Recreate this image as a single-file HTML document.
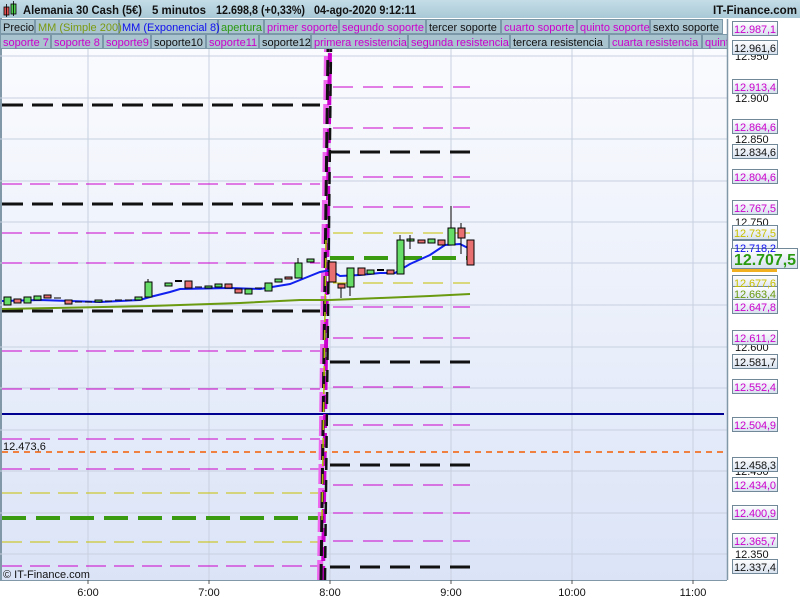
<!DOCTYPE html>
<html><head><meta charset="utf-8"><style>
body{margin:0;width:800px;height:600px;overflow:hidden;background:#fff;font-family:"Liberation Sans",sans-serif}
</style></head><body>
<svg width="800" height="600" xmlns="http://www.w3.org/2000/svg" font-family="Liberation Sans, sans-serif">
<defs>
<linearGradient id="bg" x1="0" y1="0" x2="0" y2="1"><stop offset="0" stop-color="#fafbfe"/><stop offset="1" stop-color="#dbe4f7"/></linearGradient>
<linearGradient id="tb" x1="0" y1="0" x2="0" y2="1"><stop offset="0" stop-color="#c4dde7"/><stop offset="1" stop-color="#a9c8d6"/></linearGradient>
<linearGradient id="lb" x1="0" y1="0" x2="0" y2="1"><stop offset="0" stop-color="#ffffff"/><stop offset="1" stop-color="#d6e0ee"/></linearGradient>
</defs>
<rect x="0" y="0" width="800" height="600" fill="#fff"/>
<rect x="1" y="48" width="726" height="532" fill="url(#bg)"/>
<line x1="1" y1="0" x2="1" y2="580" stroke="#8098a8" stroke-width="2"/>
<g stroke="#c8d0e0" stroke-width="1">
<line x1="0" y1="56" x2="727" y2="56"/><line x1="0" y1="98" x2="727" y2="98"/><line x1="0" y1="139" x2="727" y2="139"/><line x1="0" y1="181" x2="727" y2="181"/><line x1="0" y1="222" x2="727" y2="222"/><line x1="0" y1="263" x2="727" y2="263"/><line x1="0" y1="305" x2="727" y2="305"/><line x1="0" y1="347" x2="727" y2="347"/><line x1="0" y1="388" x2="727" y2="388"/><line x1="0" y1="430" x2="727" y2="430"/><line x1="0" y1="471" x2="727" y2="471"/><line x1="0" y1="513" x2="727" y2="513"/><line x1="0" y1="554" x2="727" y2="554"/>
<line x1="88" y1="48" x2="88" y2="580"/><line x1="209" y1="48" x2="209" y2="580"/><line x1="330" y1="48" x2="330" y2="580"/><line x1="451" y1="48" x2="451" y2="580"/><line x1="572" y1="48" x2="572" y2="580"/><line x1="693" y1="48" x2="693" y2="580"/>
</g>
<g fill="none">
<g stroke="#111" stroke-width="3" stroke-dasharray="21,9">
<line x1="2" y1="105" x2="320" y2="105"/><line x1="2" y1="204" x2="320" y2="204"/><line x1="2" y1="311" x2="320" y2="311"/>
</g>
<g stroke="#cc00cc" stroke-width="1" stroke-dasharray="20,8">
<line x1="2" y1="184" x2="320" y2="184"/><line x1="2" y1="233" x2="320" y2="233"/><line x1="2" y1="263" x2="320" y2="263"/><line x1="2" y1="351" x2="320" y2="351"/><line x1="2" y1="389" x2="320" y2="389"/><line x1="2" y1="439" x2="320" y2="439"/><line x1="2" y1="469" x2="320" y2="469"/><line x1="2" y1="566" x2="320" y2="566"/>
</g>
<g stroke="#c8c000" stroke-width="1" stroke-dasharray="20,8">
<line x1="2" y1="493" x2="320" y2="493"/><line x1="2" y1="542" x2="320" y2="542"/>
</g>
<line x1="2" y1="518" x2="320" y2="518" stroke="#3a9a10" stroke-width="4" stroke-dasharray="24,10"/>
<line x1="2" y1="414" x2="724" y2="414" stroke="#000090" stroke-width="2"/>
<line x1="2" y1="452" x2="727" y2="452" stroke="#f08040" stroke-width="2" stroke-dasharray="6,5"/>
<g stroke="#cc00cc" stroke-width="1" stroke-dasharray="20,10">
<line x1="333" y1="87" x2="470" y2="87"/><line x1="333" y1="128" x2="470" y2="128"/><line x1="333" y1="177" x2="470" y2="177"/><line x1="333" y1="207" x2="470" y2="207"/><line x1="333" y1="307" x2="470" y2="307"/><line x1="333" y1="338" x2="470" y2="338"/><line x1="333" y1="387" x2="470" y2="387"/><line x1="333" y1="425" x2="470" y2="425"/><line x1="333" y1="485" x2="470" y2="485"/><line x1="333" y1="513" x2="470" y2="513"/><line x1="333" y1="541" x2="470" y2="541"/>
</g>
<g stroke="#c8c000" stroke-width="1" stroke-dasharray="20,10">
<line x1="333" y1="233" x2="470" y2="233"/><line x1="333" y1="283" x2="470" y2="283"/>
</g>
<g stroke="#111" stroke-width="3" stroke-dasharray="20,10">
<line x1="330" y1="152" x2="470" y2="152"/><line x1="330" y1="362" x2="470" y2="362"/><line x1="330" y1="465" x2="470" y2="465"/><line x1="330" y1="567" x2="470" y2="567"/>
</g>
<line x1="330" y1="258" x2="470" y2="258" stroke="#3a9a10" stroke-width="4" stroke-dasharray="24,10"/>
<line x1="320" y1="580" x2="327" y2="48" stroke="#ee66ee" stroke-width="6" stroke-dasharray="20,4"/>
<line x1="323" y1="580" x2="330" y2="48" stroke="#cc00cc" stroke-width="4" stroke-dasharray="14,5"/>
<line x1="321" y1="580" x2="328" y2="48" stroke="#111" stroke-width="3" stroke-dasharray="16,8"/>
<line x1="325" y1="580" x2="331" y2="48" stroke="#111" stroke-width="2.5" stroke-dasharray="12,10"/>
<line x1="322" y1="520" x2="326" y2="240" stroke="#b0c000" stroke-width="1.5" stroke-dasharray="10,8"/>
<polyline stroke="#6a9a10" stroke-width="2" points="2,309 150,306 240,303 300,300 330,300 380,298 430,296 470,294"/>
<polyline stroke="#1020ee" stroke-width="2" points="2,301 40,300 100,302 140,300 150,297 170,292 180,289 230,288 260,289 290,284 305,278 320,272 330,270 340,276 360,275 380,273 395,273 410,264 430,255 445,245 460,244 470,249"/>
</g>
<g stroke="#000" stroke-width="1">
<g fill="#66dd66">
<rect x="4" y="297" width="7" height="8"/><rect x="24" y="297" width="7" height="6"/><rect x="34" y="296" width="7" height="4"/><rect x="95" y="300" width="7" height="2"/><rect x="135" y="297" width="7" height="3"/><rect x="145" y="282" width="7" height="15"/><rect x="165" y="283" width="7" height="3"/><rect x="205" y="286" width="7" height="2"/><rect x="215" y="284" width="7" height="3"/><rect x="245" y="289" width="7" height="5"/><rect x="265" y="283" width="7" height="8"/><rect x="275" y="279" width="7" height="3"/><rect x="295" y="263" width="7" height="15"/><rect x="307" y="259" width="7" height="3"/>
<rect x="347" y="268" width="7" height="19"/><rect x="367" y="270" width="7" height="4"/><rect x="397" y="240" width="7" height="34"/><rect x="407" y="239" width="7" height="2"/><rect x="428" y="239" width="7" height="4"/><rect x="448" y="228" width="7" height="17"/>
</g>
<g fill="#e87070">
<rect x="14" y="299" width="7" height="4"/><rect x="44" y="295" width="7" height="3"/><rect x="65" y="300" width="7" height="4"/><rect x="185" y="281" width="7" height="7"/><rect x="225" y="284" width="7" height="4"/><rect x="235" y="289" width="7" height="4"/><rect x="285" y="277" width="7" height="2"/>
<rect x="329" y="262" width="7" height="20"/><rect x="338" y="284" width="7" height="4"/><rect x="358" y="268" width="7" height="7"/><rect x="387" y="270" width="7" height="4"/><rect x="418" y="240" width="7" height="3"/><rect x="438" y="240" width="7" height="5"/><rect x="458" y="228" width="7" height="10"/><rect x="467" y="240" width="7" height="25"/>
</g>
<line x1="54" y1="298" x2="61" y2="298"/><line x1="75" y1="302" x2="82" y2="302"/><line x1="85" y1="302" x2="92" y2="302"/><line x1="105" y1="301" x2="112" y2="301"/><line x1="115" y1="300" x2="122" y2="300"/><line x1="125" y1="300" x2="132" y2="300"/><line x1="175" y1="281" x2="182" y2="281" stroke-width="2"/><line x1="195" y1="287" x2="202" y2="287"/><line x1="255" y1="288" x2="262" y2="288"/><line x1="377" y1="270" x2="384" y2="270" stroke-width="2"/>
<line x1="148" y1="279" x2="148" y2="282"/><line x1="298" y1="258" x2="298" y2="263"/><line x1="341" y1="288" x2="341" y2="298"/><line x1="350" y1="287" x2="350" y2="296"/><line x1="400" y1="235" x2="400" y2="240"/><line x1="451" y1="206" x2="451" y2="228"/><line x1="461" y1="223" x2="461" y2="228"/><line x1="461" y1="238" x2="461" y2="254"/><line x1="410" y1="235" x2="410" y2="249"/>
</g>
<rect x="0" y="0" width="800" height="18" fill="url(#tb)"/>
<rect x="4" y="7" width="5" height="8" fill="#e05050" stroke="#000" stroke-width="0.8"/><line x1="6.5" y1="4" x2="6.5" y2="17" stroke="#000" stroke-width="0.8"/>
<rect x="11" y="4" width="5" height="10" fill="#50d050" stroke="#000" stroke-width="0.8"/><line x1="13.5" y1="1" x2="13.5" y2="16" stroke="#000" stroke-width="0.8"/>
<g font-size="12" font-weight="bold" fill="#111" lengthAdjust="spacingAndGlyphs">
<text x="23" y="14" textLength="119" lengthAdjust="spacingAndGlyphs">Alemania 30 Cash (5€)</text><text x="152" y="14" textLength="54" lengthAdjust="spacingAndGlyphs">5 minutos</text><text x="216" y="14" textLength="89" lengthAdjust="spacingAndGlyphs">12.698,8 (+0,33%)</text><text x="314" y="14" textLength="102" lengthAdjust="spacingAndGlyphs">04-ago-2020 9:12:11</text>
<text x="713" y="14" textLength="84" lengthAdjust="spacingAndGlyphs">IT-Finance.com</text>
</g>
<g font-size="11" stroke="#7a98a8" stroke-width="1">
<rect x="0.5" y="19.5" width="34" height="14" fill="#a9c3cf"/><rect x="35.5" y="19.5" width="83" height="14" fill="#a9c3cf"/><rect x="119.5" y="19.5" width="98" height="14" fill="#a9c3cf"/><rect x="218.5" y="19.5" width="45" height="14" fill="#a9c3cf"/><rect x="264.5" y="19.5" width="74" height="14" fill="#a9c3cf"/><rect x="339.5" y="19.5" width="86" height="14" fill="#a9c3cf"/><rect x="426.5" y="19.5" width="74" height="14" fill="#a9c3cf"/><rect x="501.5" y="19.5" width="75" height="14" fill="#a9c3cf"/><rect x="577.5" y="19.5" width="72" height="14" fill="#a9c3cf"/><rect x="650.5" y="19.5" width="72" height="14" fill="#a9c3cf"/>
<rect x="0.5" y="34.5" width="50" height="14" fill="#a9c3cf"/><rect x="51.5" y="34.5" width="51" height="14" fill="#a9c3cf"/><rect x="103.5" y="34.5" width="47" height="14" fill="#a9c3cf"/><rect x="151.5" y="34.5" width="54" height="14" fill="#a9c3cf"/><rect x="206.5" y="34.5" width="52" height="14" fill="#a9c3cf"/><rect x="259.5" y="34.5" width="51" height="14" fill="#a9c3cf"/><rect x="311.5" y="34.5" width="96" height="14" fill="#a9c3cf"/><rect x="408.5" y="34.5" width="101" height="14" fill="#a9c3cf"/><rect x="510.5" y="34.5" width="98" height="14" fill="#a9c3cf"/><rect x="609.5" y="34.5" width="92" height="14" fill="#a9c3cf"/><rect x="702.5" y="34.5" width="25" height="14" fill="#a9c3cf"/>
</g>
<g font-size="11">
<text x="3" y="31" fill="#111">Precio</text><text x="38" y="31" fill="#7a9a10">MM (Simple 200)</text><text x="122" y="31" fill="#1010ee">MM (Exponencial 8)</text><text x="221" y="31" fill="#2a9a10">apertura</text><text x="267" y="31" fill="#cc00cc">primer soporte</text><text x="342" y="31" fill="#cc00cc">segundo soporte</text><text x="429" y="31" fill="#111">tercer soporte</text><text x="504" y="31" fill="#cc00cc">cuarto soporte</text><text x="580" y="31" fill="#cc00cc">quinto soporte</text><text x="653" y="31" fill="#111">sexto soporte</text>
<text x="3" y="46" fill="#cc00cc">soporte 7</text><text x="54" y="46" fill="#cc00cc">soporte 8</text><text x="106" y="46" fill="#cc00cc">soporte9</text><text x="154" y="46" fill="#111">soporte10</text><text x="209" y="46" fill="#cc00cc">soporte11</text><text x="262" y="46" fill="#111">soporte12</text><text x="314" y="46" fill="#cc00cc">primera resistencia</text><text x="411" y="46" fill="#cc00cc">segunda resistencia</text><text x="513" y="46" fill="#111">tercera resistencia</text><text x="612" y="46" fill="#cc00cc">cuarta resistencia</text><text x="705" y="46" fill="#cc00cc">quinta</text>
</g>
<rect x="728" y="19" width="72" height="581" fill="#fff"/>
<line x1="727.5" y1="19" x2="727.5" y2="580" stroke="#8098a8" stroke-width="1.5"/>
<g font-size="11" fill="#111">
<text x="735" y="60">12.950</text><text x="735" y="102">12.900</text><text x="735" y="143">12.850</text><text x="735" y="226">12.750</text><text x="735" y="351">12.600</text><text x="735" y="475">12.450</text><text x="735" y="558">12.350</text>
</g>
<g stroke="#708898" stroke-width="1">
<rect x="732.5" y="21.5" width="45" height="14" fill="url(#lb)"/><rect x="732.5" y="40.5" width="45" height="14" fill="url(#lb)"/><rect x="732.5" y="79.5" width="45" height="14" fill="url(#lb)"/><rect x="732.5" y="119.5" width="45" height="14" fill="url(#lb)"/><rect x="732.5" y="144.5" width="45" height="14" fill="url(#lb)"/><rect x="732.5" y="169.5" width="45" height="14" fill="url(#lb)"/><rect x="732.5" y="200.5" width="45" height="14" fill="url(#lb)"/><rect x="732.5" y="225.5" width="45" height="14" fill="url(#lb)"/><rect x="732.5" y="240.5" width="45" height="14" fill="url(#lb)"/><rect x="732.5" y="275.5" width="45" height="14" fill="url(#lb)"/><rect x="732.5" y="286.5" width="45" height="14" fill="url(#lb)"/><rect x="732.5" y="299.5" width="45" height="14" fill="url(#lb)"/><rect x="732.5" y="330.5" width="45" height="14" fill="url(#lb)"/><rect x="732.5" y="354.5" width="45" height="14" fill="url(#lb)"/><rect x="732.5" y="379.5" width="45" height="14" fill="url(#lb)"/><rect x="732.5" y="417.5" width="45" height="14" fill="url(#lb)"/><rect x="732.5" y="457.5" width="45" height="14" fill="url(#lb)"/><rect x="732.5" y="477.5" width="45" height="14" fill="url(#lb)"/><rect x="732.5" y="505.5" width="45" height="14" fill="url(#lb)"/><rect x="732.5" y="533.5" width="45" height="14" fill="url(#lb)"/><rect x="732.5" y="559.5" width="45" height="14" fill="url(#lb)"/>
<rect x="732" y="263" width="45" height="9" fill="#f0b020" stroke="none"/>
<rect x="731.5" y="248.5" width="66" height="20" fill="url(#lb)"/>
</g>
<g font-size="11" lengthAdjust="spacingAndGlyphs">
<text x="734" y="33" fill="#cc00cc" textLength="42">12.987,1</text><text x="734" y="52" fill="#111" textLength="42">12.961,6</text><text x="734" y="91" fill="#cc00cc" textLength="42">12.913,4</text><text x="734" y="131" fill="#cc00cc" textLength="42">12.864,6</text><text x="734" y="156" fill="#111" textLength="42">12.834,6</text><text x="734" y="181" fill="#cc00cc" textLength="42">12.804,6</text><text x="734" y="212" fill="#cc00cc" textLength="42">12.767,5</text><text x="734" y="237" fill="#c8c000" textLength="42">12.737,5</text><text x="734" y="252" fill="#1010ee" textLength="42">12.718,2</text><text x="734" y="287" fill="#c8c000" textLength="42">12.677,6</text><text x="734" y="298" fill="#6a9a10" textLength="42">12.663,4</text><text x="734" y="311" fill="#cc00cc" textLength="42">12.647,8</text><text x="734" y="342" fill="#cc00cc" textLength="42">12.611,2</text><text x="734" y="366" fill="#111" textLength="42">12.581,7</text><text x="734" y="391" fill="#cc00cc" textLength="42">12.552,4</text><text x="734" y="429" fill="#cc00cc" textLength="42">12.504,9</text><text x="734" y="469" fill="#111" textLength="42">12.458,3</text><text x="734" y="489" fill="#cc00cc" textLength="42">12.434,0</text><text x="734" y="517" fill="#cc00cc" textLength="42">12.400,9</text><text x="734" y="545" fill="#cc00cc" textLength="42">12.365,7</text><text x="734" y="571" fill="#111" textLength="42">12.337,4</text>
</g>
<text x="734" y="265" font-size="16" font-weight="bold" fill="#2a9a10" textLength="62" lengthAdjust="spacingAndGlyphs">12.707,5</text>
<text x="3" y="450" font-size="11" fill="#111">12.473,6</text>
<text x="3" y="578" font-size="11" fill="#111">© IT-Finance.com</text>
<line x1="0" y1="580.5" x2="727" y2="580.5" stroke="#8098a8"/>
<g stroke="#555"><line x1="88" y1="580" x2="88" y2="584"/><line x1="209" y1="580" x2="209" y2="584"/><line x1="330" y1="580" x2="330" y2="584"/><line x1="451" y1="580" x2="451" y2="584"/><line x1="572" y1="580" x2="572" y2="584"/><line x1="693" y1="580" x2="693" y2="584"/></g>
<g font-size="11" fill="#111" text-anchor="middle"><text x="88" y="596">6:00</text><text x="209" y="596">7:00</text><text x="330" y="596">8:00</text><text x="451" y="596">9:00</text><text x="572" y="596">10:00</text><text x="693" y="596">11:00</text></g>
</svg>
</body></html>
